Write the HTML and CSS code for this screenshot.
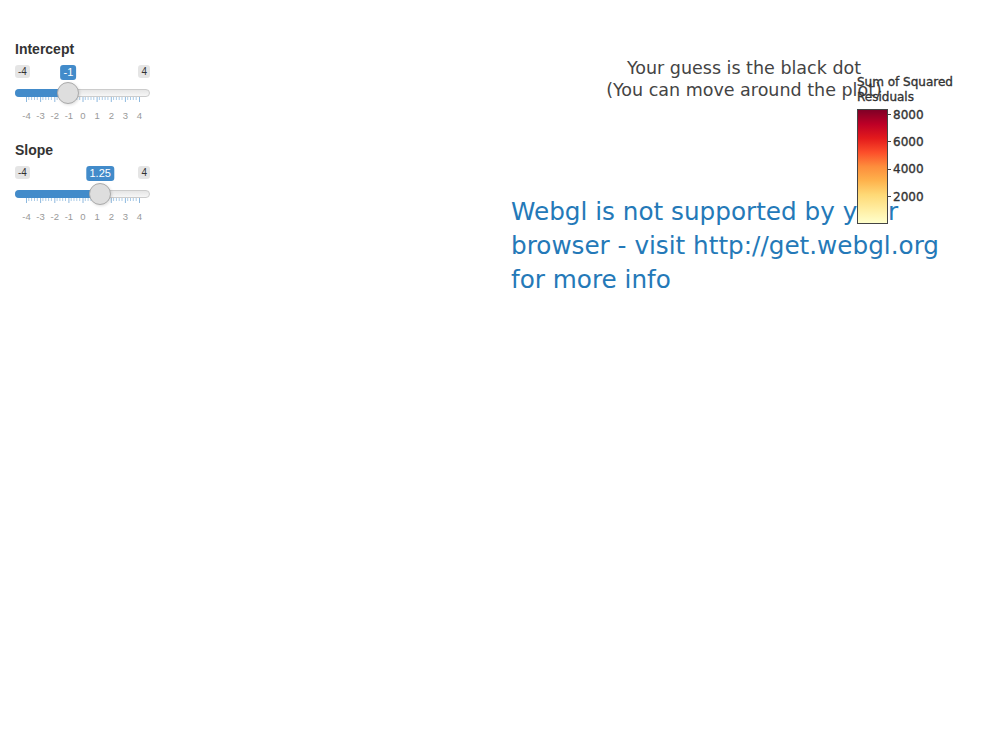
FILE: index.html
```html
<!DOCTYPE html>
<html lang="en">
<head>
<meta charset="utf-8">
<title>Sum of Squared Residuals</title>
<link rel="stylesheet" href="styles.css">
</head>
<body>
<div class="page">
  <aside class="sidebar">
    <div class="slider">
      <label class="slider-label">Intercept</label>
      <div class="irs">
        <div class="irs-minmax"><span class="irs-min">-4</span><span class="irs-max">4</span></div>
        <span class="irs-single" style="left: 53.4px">-1</span>
        <div class="irs-line"><div class="irs-bar" style="width: 54.4px"></div></div>
        <span class="irs-handle" style="left: 42.4px"></span>
        <svg class="irs-grid" width="135" height="27" viewBox="0 0 135 27">
          <g class="pol-small" stroke="#428bca" stroke-opacity="0.45" stroke-width="1">
            <path d="M13.8 0v3M16.6 0v3M19.5 0v3M22.3 0v3M27.9 0v3M30.8 0v3M33.6 0v3M36.4 0v3M42.1 0v3M44.9 0v3M47.7 0v3M50.5 0v3M56.2 0v3M59 0v3M61.8 0v3M64.7 0v3M70.3 0v3M73.1 0v3M76 0v3M78.8 0v3M84.4 0v3M87.3 0v3M90.1 0v3M92.9 0v3M98.6 0v3M101.4 0v3M104.2 0v3M107 0v3M112.7 0v3M115.5 0v3M118.3 0v3M121.2 0v3"/>
          </g>
          <g class="pol-big" stroke="#428bca" stroke-opacity="0.6" stroke-width="1">
            <path d="M11.5 0v5M25.6 0v5M39.8 0v5M53.9 0v5M68 0v5M82.1 0v5M96.3 0v5M110.4 0v5M124.5 0v5"/>
          </g>
          <g class="grid-text">
            <text x="11.5" y="21.5">-4</text><text x="25.6" y="21.5">-3</text><text x="39.8" y="21.5">-2</text><text x="53.9" y="21.5">-1</text><text x="68" y="21.5">0</text><text x="82.1" y="21.5">1</text><text x="96.3" y="21.5">2</text><text x="110.4" y="21.5">3</text><text x="124.5" y="21.5">4</text>
          </g>
        </svg>
      </div>
    </div>
    <div class="slider">
      <label class="slider-label">Slope</label>
      <div class="irs">
        <div class="irs-minmax"><span class="irs-min">-4</span><span class="irs-max">4</span></div>
        <span class="irs-single" style="left: 85.2px">1.25</span>
        <div class="irs-line"><div class="irs-bar" style="width: 86.2px"></div></div>
        <span class="irs-handle" style="left: 74.2px"></span>
        <svg class="irs-grid" width="135" height="27" viewBox="0 0 135 27">
          <g class="pol-small" stroke="#428bca" stroke-opacity="0.45" stroke-width="1">
            <path d="M13.8 0v3M16.6 0v3M19.5 0v3M22.3 0v3M27.9 0v3M30.8 0v3M33.6 0v3M36.4 0v3M42.1 0v3M44.9 0v3M47.7 0v3M50.5 0v3M56.2 0v3M59 0v3M61.8 0v3M64.7 0v3M70.3 0v3M73.1 0v3M76 0v3M78.8 0v3M84.4 0v3M87.3 0v3M90.1 0v3M92.9 0v3M98.6 0v3M101.4 0v3M104.2 0v3M107 0v3M112.7 0v3M115.5 0v3M118.3 0v3M121.2 0v3"/>
          </g>
          <g class="pol-big" stroke="#428bca" stroke-opacity="0.6" stroke-width="1">
            <path d="M11.5 0v5M25.6 0v5M39.8 0v5M53.9 0v5M68 0v5M82.1 0v5M96.3 0v5M110.4 0v5M124.5 0v5"/>
          </g>
          <g class="grid-text">
            <text x="11.5" y="21.5">-4</text><text x="25.6" y="21.5">-3</text><text x="39.8" y="21.5">-2</text><text x="53.9" y="21.5">-1</text><text x="68" y="21.5">0</text><text x="82.1" y="21.5">1</text><text x="96.3" y="21.5">2</text><text x="110.4" y="21.5">3</text><text x="124.5" y="21.5">4</text>
          </g>
        </svg>
      </div>
    </div>
  </aside>
  <main class="plot">
    <div class="plot-title">Your guess is the black dot<br>(You can move around the plot)</div>
    <div class="no-webgl">Webgl is not supported by your browser - visit http://get.webgl.org for more info</div>
    <div class="colorbar">
      <div class="colorbar-title">Sum of Squared<br>Residuals</div>
      <div class="colorbar-body">
        <div class="colorbar-scale"></div>
        <div class="colorbar-ticks">
          <span class="tick">8000</span>
          <span class="tick">6000</span>
          <span class="tick">4000</span>
          <span class="tick">2000</span>
        </div>
      </div>
    </div>
  </main>
</div>
</body>
</html>
```
FILE: styles.css
```css
html, body {
  margin: 0;
  padding: 0;
  background: #fff;
}

body {
  font-family: "Liberation Sans", Arial, Helvetica, sans-serif;
  color: #333;
}

.page {
  display: grid;
  grid-template-columns: 496px 1fr;
  min-height: 744px;
}

/* ---------- sidebar sliders ---------- */
.sidebar {
  padding: 39px 0 0 15px;
}

.slider {
  width: 135px;
  margin-bottom: 15px;
}

.slider-label {
  display: block;
  font-size: 14px;
  line-height: 20px;
  font-weight: 700;
  color: #333;
}

.irs {
  position: relative;
  margin-top: 6px;
  height: 60px;
}

.irs-minmax {
  display: flex;
  justify-content: space-between;
  margin-top: 1px;
  height: 13px;
}

.irs-min,
.irs-max {
  font-size: 10px;
  line-height: 12px;
  padding: 1px 3px;
  color: #333;
  background: rgba(0, 0, 0, 0.1);
  border-radius: 3px;
}

.irs-single {
  position: absolute;
  top: 0;
  transform: translateX(-50%);
  font-size: 11px;
  line-height: 13px;
  padding: 1px 3px;
  color: #fff;
  background: #428bca;
  border-radius: 3px;
  white-space: nowrap;
}

.irs-line {
  position: relative;
  box-sizing: border-box;
  margin-top: 11px;
  height: 8px;
  border: 1px solid #cccccc;
  border-radius: 16px;
  background: linear-gradient(to bottom, #dddddd -50%, #ffffff 150%);
}

.irs-bar {
  position: absolute;
  top: -1px;
  left: -1px;
  height: 8px;
  background: #428bca;
  border-radius: 16px 0 0 16px;
}

.irs-handle {
  position: absolute;
  top: 17px;
  box-sizing: border-box;
  width: 22px;
  height: 22px;
  border: 1px solid #aaaaaa;
  border-radius: 50%;
  background: #dedede;
  box-shadow: 1px 1px 3px rgba(0, 0, 0, 0.12);
}

.irs-grid {
  display: block;
}

.grid-text text {
  font-family: "Liberation Sans", Arial, sans-serif;
  font-size: 9.5px;
  fill: #999999;
  text-anchor: middle;
}

/* ---------- plot area ---------- */
.plot {
  position: relative;
  font-family: Verdana, "DejaVu Sans", sans-serif;
}

.plot-title {
  padding-top: 57px;
  text-align: center;
  font-size: 17.5px;
  line-height: 22px;
  color: #444;
}

.no-webgl {
  margin-top: 94px;
  padding-left: 15px;
  max-width: 440px;
  font-size: 24.7px;
  line-height: 34px;
  color: #2479b8;
}

.colorbar {
  position: absolute;
  top: 75px;
  left: 361px;
  color: #333;
}

.colorbar-title {
  font-size: 12px;
  line-height: 15px;
  -webkit-text-stroke: 0.35px #333;
  white-space: nowrap;
}

.colorbar-body {
  display: flex;
  margin-top: 4px;
}

.colorbar-scale {
  box-sizing: border-box;
  width: 31px;
  height: 115px;
  border: 1.5px solid #444;
  background: linear-gradient(to bottom,
    rgb(128, 0, 38) 0%,
    rgb(189, 0, 38) 12.5%,
    rgb(227, 26, 28) 25%,
    rgb(252, 78, 42) 37.5%,
    rgb(253, 141, 60) 50%,
    rgb(254, 178, 76) 62.5%,
    rgb(254, 217, 118) 75%,
    rgb(255, 237, 160) 87.5%,
    rgb(255, 255, 204) 100%);
}

.colorbar-ticks {
  display: flex;
  flex-direction: column;
  gap: 15.4px;
  margin-top: -0.5px;
}

.tick {
  display: flex;
  align-items: center;
  height: 12px;
  font-size: 12px;
  line-height: 12px;
  -webkit-text-stroke: 0.35px #333;
}

.tick::before {
  content: "";
  width: 3px;
  height: 1px;
  margin-right: 2px;
  background: #444;
}
```
